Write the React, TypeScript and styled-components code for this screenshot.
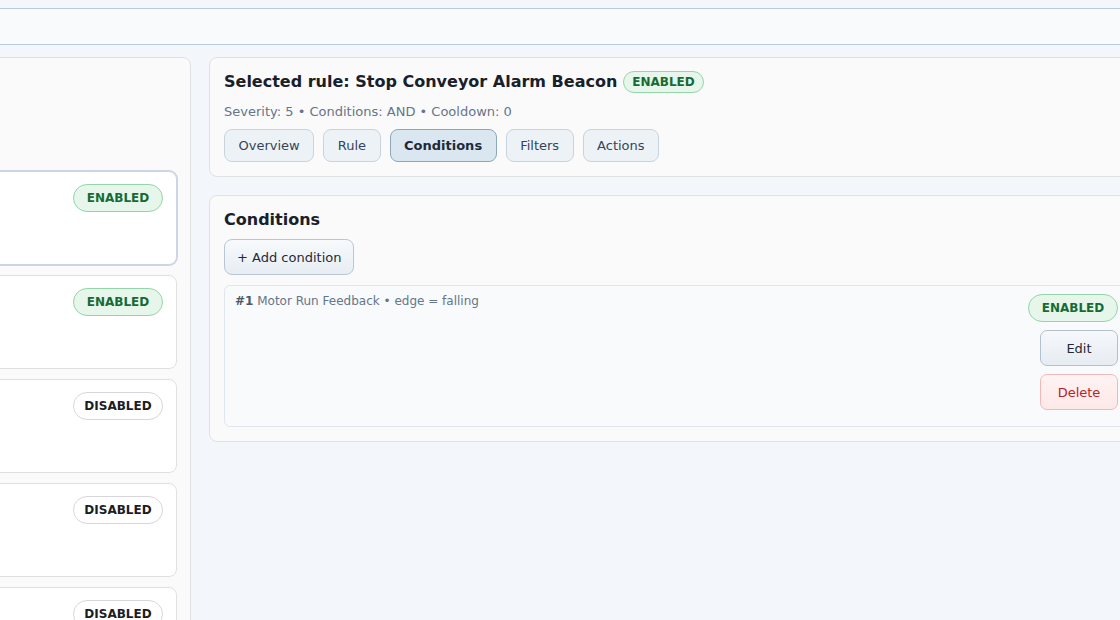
import React from "react";
import styled, { createGlobalStyle, css } from "styled-components";

const GlobalStyle = createGlobalStyle`
  html, body {
    margin: 0;
    padding: 0;
    height: 100%;
    overflow: hidden;
    background: #f3f6fa;
  }
  body {
    font-family: "DejaVu Sans", "Noto Sans", sans-serif;
    color: #1f2937;
  }
  * { box-sizing: border-box; }
`;

const Page = styled.div`
  width: 100%;
  height: 100vh;
  overflow: hidden;
  padding-top: 8px;
`;

const TopBar = styled.header`
  height: 37px;
  background: #f8fafc;
  border-top: 1px solid #b8cbdb;
  border-bottom: 1px solid #b8cbdb;
`;

const Main = styled.main`
  display: grid;
  grid-template-columns: 341px 935px;
  column-gap: 18px;
  align-items: start;
  margin-top: 12px;
  margin-left: -150px;
`;

const RulesPanel = styled.section`
  background: #fafafa;
  border: 1px solid #e1e1e1;
  border-radius: 8px;
  padding: 13px;
  min-height: 700px;
`;

const PanelHead = styled.div`
  height: 100px;
`;

const RuleList = styled.div`
  display: flex;
  flex-direction: column;
  gap: 10px;
`;

const RuleCard = styled.div<{ $selected?: boolean }>`
  height: 94px;
  background: #ffffff;
  border: 1px solid #e0e0e0;
  border-radius: 8px;
  padding: 12px 13px;
  display: flex;
  justify-content: flex-end;
  align-items: flex-start;
  ${(p) =>
    p.$selected &&
    css`
      border-color: #ccd6e2;
      box-shadow: 0 0 0 1px #ccd6e2;
    `}
`;

const Badge = styled.span<{ $on: boolean; $size?: "sm" | "md" }>`
  display: inline-flex;
  align-items: center;
  justify-content: center;
  font-size: 12px;
  font-weight: 700;
  line-height: 16px;
  border-radius: 999px;
  white-space: nowrap;
  height: ${(p) => (p.$size === "sm" ? "22px" : "28px")};
  min-width: ${(p) => (p.$size === "sm" ? "0" : "90px")};
  padding: ${(p) => (p.$size === "sm" ? "0 8px" : "0 10px")};
  ${(p) =>
    p.$on
      ? css`
          background: #e6f6eb;
          border: 1px solid #94d6a9;
          color: #166a35;
        `
      : css`
          background: #ffffff;
          border: 1px solid #d6d6dc;
          color: #1d1d1f;
        `}
`;

const Column = styled.div`
  display: flex;
  flex-direction: column;
  gap: 18px;
`;

const Card = styled.section`
  background: #fafafa;
  border: 1px solid #e1e1e1;
  border-radius: 8px;
  padding: 13px 14px 14px;
  display: flex;
  flex-direction: column;
`;

const TitleRow = styled.div`
  display: flex;
  align-items: center;
  gap: 6px;
  height: 22px;
`;

const Title = styled.h2`
  margin: 0;
  font-size: 16px;
  line-height: 20px;
  font-weight: 700;
  color: #18202b;
`;

const Meta = styled.div`
  margin-top: 10px;
  font-size: 13px;
  line-height: 18px;
  color: #66758a;
`;

const Tabs = styled.nav`
  display: flex;
  gap: 9px;
  margin-top: 8px;
`;

const Tab = styled.button<{ $active?: boolean }>`
  height: 33px;
  padding: 0 13.5px;
  font-family: inherit;
  font-size: 13px;
  border-radius: 8px;
  cursor: pointer;
  background: ${(p) => (p.$active ? "#dae6f0" : "#edf2f6")};
  border: 1px solid ${(p) => (p.$active ? "#8ea7bc" : "#c7d4de")};
  color: ${(p) => (p.$active ? "#1c2a3a" : "#34455a")};
  font-weight: ${(p) => (p.$active ? 700 : 400)};
`;

const SectionTitle = styled(Title)`
  height: 21px;
  padding-top: 1px;
`;

const GhostButton = styled.button`
  align-self: flex-start;
  height: 36px;
  margin-top: 9px;
  padding: 0 12px;
  font-family: inherit;
  font-size: 13px;
  color: #1f2a37;
  background: linear-gradient(#f8fafc, #e7edf3);
  border: 1px solid #b9c7d4;
  border-radius: 8px;
  cursor: pointer;
`;

const ConditionItem = styled.div`
  margin-top: 10px;
  display: flex;
  justify-content: space-between;
  align-items: flex-start;
  background: #f8fafc;
  border: 1px solid #e0e6ee;
  border-radius: 6px;
  padding: 7px 10px 16px;
`;

const ConditionText = styled.div`
  font-size: 12px;
  line-height: 16px;
  color: #66758a;

  b {
    color: #4b5869;
    font-weight: 700;
  }
`;

const ItemActions = styled.div`
  display: flex;
  flex-direction: column;
  align-items: flex-end;
  gap: 8px;
  padding-top: 1px;
`;

const ActionButton = styled.button<{ $danger?: boolean }>`
  width: 78px;
  height: 36px;
  font-family: inherit;
  font-size: 13px;
  border-radius: 7px;
  cursor: pointer;
  ${(p) =>
    p.$danger
      ? css`
          background: linear-gradient(#fff3f3, #fde8e8);
          border: 1px solid #f2b8b8;
          color: #b4232a;
        `
      : css`
          background: linear-gradient(#f6f8fb, #e6ecf2);
          border: 1px solid #b3c1ce;
          color: #1f2a37;
        `}
`;

const rules = [
  { id: 1, enabled: true },
  { id: 2, enabled: true },
  { id: 3, enabled: false },
  { id: 4, enabled: false },
  { id: 5, enabled: false },
];

const tabs = ["Overview", "Rule", "Conditions", "Filters", "Actions"];

export default function App() {
  return (
    <>
      <GlobalStyle />
      <Page>
        <TopBar />
        <Main>
          <RulesPanel>
            <PanelHead />
            <RuleList>
              {rules.map((r, i) => (
                <RuleCard key={r.id} $selected={i === 0}>
                  <Badge $on={r.enabled}>{r.enabled ? "ENABLED" : "DISABLED"}</Badge>
                </RuleCard>
              ))}
            </RuleList>
          </RulesPanel>

          <Column>
            <Card>
              <TitleRow>
                <Title>Selected rule: Stop Conveyor Alarm Beacon</Title>
                <Badge $on $size="sm">ENABLED</Badge>
              </TitleRow>
              <Meta>Severity: 5 • Conditions: AND • Cooldown: 0</Meta>
              <Tabs>
                {tabs.map((t) => (
                  <Tab key={t} $active={t === "Conditions"}>
                    {t}
                  </Tab>
                ))}
              </Tabs>
            </Card>

            <Card>
              <SectionTitle>Conditions</SectionTitle>
              <GhostButton>+ Add condition</GhostButton>
              <ConditionItem>
                <ConditionText>
                  <b>#1</b> Motor Run Feedback • edge = falling
                </ConditionText>
                <ItemActions>
                  <Badge $on>ENABLED</Badge>
                  <ActionButton>Edit</ActionButton>
                  <ActionButton $danger>Delete</ActionButton>
                </ItemActions>
              </ConditionItem>
            </Card>
          </Column>
        </Main>
      </Page>
    </>
  );
}
